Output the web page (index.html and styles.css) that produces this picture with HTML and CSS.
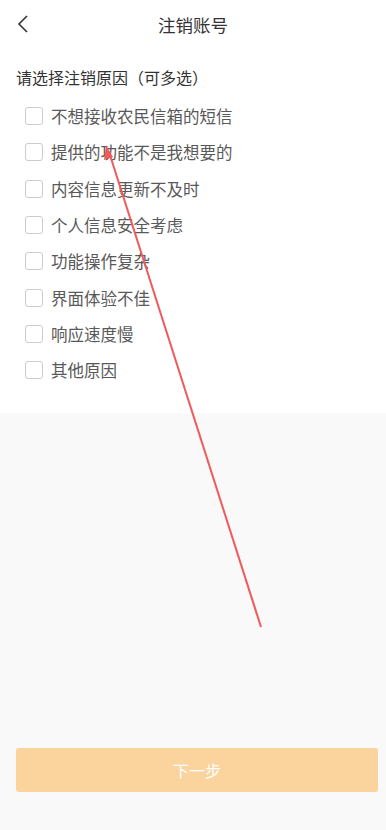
FILE: index.html
```html
<!DOCTYPE html>
<html>
    <head>
        <meta charset="UTF-8">
        <meta name="viewport" content="width=device-width, initial-scale=1">
        <title>注销账号</title>
        <link rel="stylesheet" href="styles.css">
    </head>
    <body>
        <div class="page">
            <div class="top">
                <div class="nav-bar">
                    <span class="back">
                        <svg width="14" height="20" viewBox="0 0 14 20"><path d="M11 2 L3 10 L11 18" fill="none" stroke="#333" stroke-width="1.6"/></svg>
                    </span>
                    <span class="nav-title">注销账号</span>
                </div>
                <p class="tip">请选择注销原因（可多选）</p>
                <ul class="reason-list">
                    <li class="reason-item"><span class="check"></span>不想接收农民信箱的短信</li>
                    <li class="reason-item"><span class="check"></span>提供的功能不是我想要的</li>
                    <li class="reason-item"><span class="check"></span>内容信息更新不及时</li>
                    <li class="reason-item"><span class="check"></span>个人信息安全考虑</li>
                    <li class="reason-item"><span class="check"></span>功能操作复杂</li>
                    <li class="reason-item"><span class="check"></span>界面体验不佳</li>
                    <li class="reason-item"><span class="check"></span>响应速度慢</li>
                    <li class="reason-item"><span class="check"></span>其他原因</li>
                </ul>
            </div>
            <div class="bottom">
                <button type="button" class="next-btn">下一步</button>
            </div>
        </div>
        <!-- 标注箭头 -->
        <svg class="mark" width="386" height="830" viewBox="0 0 386 830">
            <line x1="261" y1="627" x2="109" y2="152" stroke="#f05a5a" stroke-width="2"/>
            <polygon points="106,145 104,160 113,157" fill="#f05a5a"/>
        </svg>
    </body>
</html>
```

FILE: styles.css
```css
body {
    margin: 0;
    font-family: "Noto Sans CJK SC", "Noto Sans", sans-serif;
    background: #f9f9f9;
}
.page {
    width: 386px;
    height: 830px;
    display: flex;
    flex-direction: column;
}
.top {
    background: #fff;
    height: 413px;
}
.nav-bar {
    height: 50px;
    display: flex;
    align-items: center;
    justify-content: center;
    position: relative;
}
.back {
    position: absolute;
    left: 16px;
    top: 14px;
}
.nav-title {
    font-size: 17.5px;
    color: #333;
    margin-bottom: 2px;
}
.tip {
    margin: 14px 0 0 16px;
    font-size: 16px;
    color: #333;
    line-height: 26px;
}
.reason-list {
    list-style: none;
    margin: 8px 0 0 0;
    padding: 0 0 0 25px;
}
.reason-item {
    height: 36.3px;
    display: flex;
    align-items: center;
    font-size: 16.5px;
    color: #595959;
}
.check {
    width: 18px;
    height: 18px;
    border: 1px solid #ccc;
    border-radius: 3px;
    box-sizing: border-box;
    margin-right: 8px;
}
.bottom {
    flex: 1;
    padding: 335px 8px 0 16px;
}
.next-btn {
    width: 362px;
    height: 44px;
    border: none;
    border-radius: 3px;
    background: #fbd39d;
    color: #fff;
    font-family: inherit;
    font-size: 16px;
}
.mark {
    position: absolute;
    left: 0;
    top: 0;
    pointer-events: none;
}
```
